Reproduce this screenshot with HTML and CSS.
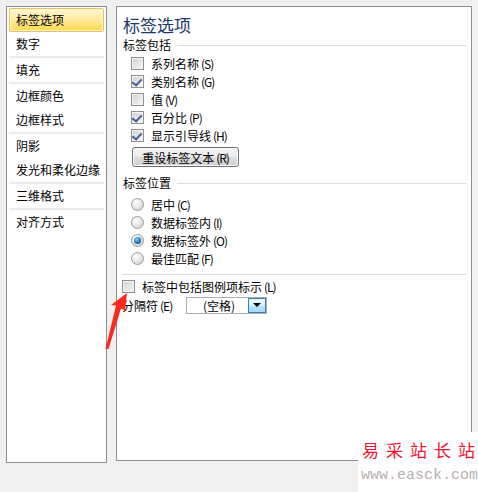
FILE: index.html
```html
<!DOCTYPE html>
<html lang="zh-CN">
<head>
  <meta charset="UTF-8">
  <title>设置数据标签格式</title>
  <link rel="stylesheet" href="styles.css">
</head>
<body>

  <div class="dialog">
    <ul class="nav">
      <li class="nav-item selected">标签选项</li>
      <li class="nav-item">数字</li>
      <li class="sep"></li>
      <li class="nav-item">填充</li>
      <li class="sep"></li>
      <li class="nav-item">边框颜色</li>
      <li class="nav-item">边框样式</li>
      <li class="sep"></li>
      <li class="nav-item">阴影</li>
      <li class="nav-item">发光和柔化边缘</li>
      <li class="sep"></li>
      <li class="nav-item">三维格式</li>
      <li class="sep"></li>
      <li class="nav-item">对齐方式</li>
    </ul>

    <div class="panel">
      <div class="panel-title">标签选项</div>

      <div class="group-head"><span>标签包括</span></div>
      <div class="group">
        <div class="opt"><span class="check"></span>系列名称<span class="key">(S)</span></div>
        <div class="opt"><span class="check on"></span>类别名称<span class="key">(G)</span></div>
        <div class="opt"><span class="check"></span>值<span class="key">(V)</span></div>
        <div class="opt"><span class="check on"></span>百分比<span class="key">(P)</span></div>
        <div class="opt"><span class="check on"></span>显示引导线<span class="key">(H)</span></div>
        <button class="btn">重设标签文本<span class="key">(R)</span></button>
      </div>

      <div class="group-head second"><span>标签位置</span></div>
      <div class="group radios">
        <div class="opt"><span class="radio"></span>居中<span class="key">(C)</span></div>
        <div class="opt"><span class="radio"></span>数据标签内<span class="key">(I)</span></div>
        <div class="opt"><span class="radio on"></span>数据标签外<span class="key">(O)</span></div>
        <div class="opt"><span class="radio"></span>最佳匹配<span class="key">(F)</span></div>
      </div>

      <div class="rule"></div>

      <div class="opt outer"><span class="check"></span>标签中包括图例项标示<span class="key">(L)</span></div>
      <div class="sep-row">
        <span>分隔符<span class="key">(E)</span></span>
        <span class="combo">
          <span class="combo-text">(空格)</span>
          <span class="combo-btn"></span>
        </span>
      </div>
    </div>
  </div>

  <!-- 红色箭头标注 -->
  <svg class="arrow" width="478" height="492" viewBox="0 0 478 492">
    <polygon points="127,293 111,305 116,305.5 105.5,349 108.5,349 121,308.5 125,310.5" fill="#fb2a1e"/>
  </svg>

  <div class="watermark">
    <div class="wm-cn">易采站长<span class="last">站</span></div>
    <div class="wm-en">www.easck.com</div>
  </div>

</body>
</html>
```

FILE: styles.css
```css
body {
  margin: 0;
  padding: 6px 0 0 6px;
  background-color: #f0f0f0;
  font-family: "Noto Sans CJK SC", "Noto Sans", sans-serif;
  font-size: 12px;
  color: #000;
  width: 478px;
  height: 492px;
  box-sizing: border-box;
  overflow: hidden;
}

.dialog {
  display: flex;
  gap: 9px;
}

/* 左侧导航 */
.nav {
  list-style: none;
  margin: 0;
  padding: 1px;
  width: 97px;
  height: 453px;
  border: 1px solid #8e8f8f;
  background-color: white;
}

.nav-item {
  height: 24px;
  line-height: 24px;
  padding-left: 8px;
  white-space: nowrap;
}

.nav-item.selected {
  height: 22px;
  line-height: 22px;
  margin: 0 1px;
  padding-left: 6px;
  border: 1px solid #e5c365;
  border-radius: 2px;
  background: linear-gradient(#fff8d8, #ffe894 55%, #ffd84c);
  box-shadow: inset 0 0 0 1px #fff6cf;
}

.sep {
  height: 2px;
  margin: 0 1px;
  background-color: #e9ecef;
}

/* 右侧面板 */
.panel {
  width: 343px;
  height: 447px;
  padding: 6px 5px 0 6px;
  border: 1px solid #8e8f8f;
  background-color: white;
}

.panel-title {
  font-size: 17px;
  line-height: 23px;
  color: #1e3a6a;
}

.group-head {
  display: flex;
  align-items: center;
  height: 18px;
  line-height: 18px;
}

.group-head::after {
  content: "";
  flex: 1;
  height: 1px;
  margin-left: 6px;
  background-color: #d5dfe5;
}

.group-head.second {
  margin-top: 7px;
}

.group {
  padding-left: 8px;
}

.radios {
  margin-top: 3px;
}

.opt {
  display: flex;
  align-items: center;
  height: 18px;
  white-space: nowrap;
}

.key {
  font-size: 12px;
  margin-left: 2px;
  letter-spacing: -1px;
}

.check {
  position: relative;
  width: 13px;
  height: 13px;
  margin-right: 7px;
  box-sizing: border-box;
  border: 1px solid #8e8f8f;
  background: linear-gradient(135deg, #cdd0d4, #f7f7f7);
  box-shadow: inset 0 0 0 1px #f4f4f4;
}

.check.on::after {
  content: "";
  position: absolute;
  left: 2px;
  top: 1px;
  width: 4px;
  height: 7px;
  border-right: 2px solid #4b5f96;
  border-bottom: 2px solid #4b5f96;
  transform: rotate(38deg) skewX(-6deg);
}

.radio {
  position: relative;
  width: 13px;
  height: 13px;
  margin-right: 7px;
  box-sizing: border-box;
  border-radius: 50%;
  border: 1px solid #9a9a9a;
  background: radial-gradient(circle at 35% 30%, #ffffff, #dcdcdc 70%, #c8c8c8);
}

.radio.on::after {
  content: "";
  position: absolute;
  left: 2px;
  top: 2px;
  width: 7px;
  height: 7px;
  border-radius: 50%;
  background: radial-gradient(circle at 40% 35%, #9fd6f5, #2a80c4 45%, #0b3c6e);
}

.btn {
  display: block;
  margin: 3px 0 0 1px;
  width: 107px;
  height: 20px;
  padding: 0;
  font-family: inherit;
  font-size: 12px;
  color: #000;
  border: 1px solid #707070;
  border-radius: 3px;
  background: linear-gradient(#f4f4f4, #ebebeb 48%, #dddddd 52%, #cfcfcf);
  box-shadow: inset 0 0 0 1px #fbfbfb;
}

.rule {
  height: 1px;
  margin: 7px 0 0 -1px;
  background-color: #d5dfe5;
}

.outer {
  margin: 2px 0 0 -1px;
}

.sep-row {
  display: flex;
  align-items: center;
  height: 20px;
  margin-left: -1px;
  white-space: nowrap;
}

.combo {
  display: flex;
  margin-left: auto;
  margin-right: 199px;
  width: 81px;
  height: 17px;
  box-sizing: border-box;
  border: 1px solid #abadb3;
}

.combo-text {
  flex: 1;
  line-height: 15px;
  text-align: center;
  padding-left: 3px;
}

.combo-btn {
  display: flex;
  align-items: center;
  justify-content: center;
  width: 18px;
  box-sizing: border-box;
  border: 1px solid #3c7fb1;
  background: linear-gradient(#eaf6fd, #d9f0fc 50%, #bee6fd 51%, #a7d9f5);
}

.combo-btn::after {
  content: "";
  border-left: 4px solid transparent;
  border-right: 4px solid transparent;
  border-top: 4px solid #000;
}

/* 覆盖层 */
.arrow {
  position: absolute;
  left: 0;
  top: 0;
  pointer-events: none;
}

.watermark {
  position: absolute;
  left: 358px;
  top: 432px;
  width: 120px;
  height: 60px;
  background-color: white;
}

.wm-cn {
  margin: 6px 0 0 4px;
  font-size: 17px;
  line-height: 24px;
  letter-spacing: 7px;
  color: #f0142d;
  white-space: nowrap;
}

.wm-cn .last {
  letter-spacing: 0;
}

.wm-en {
  margin: 4px 0 0 3px;
  font-family: "Liberation Mono", monospace;
  font-size: 15px;
  line-height: 20px;
  color: #b9b0b0;
  white-space: nowrap;
}
```
